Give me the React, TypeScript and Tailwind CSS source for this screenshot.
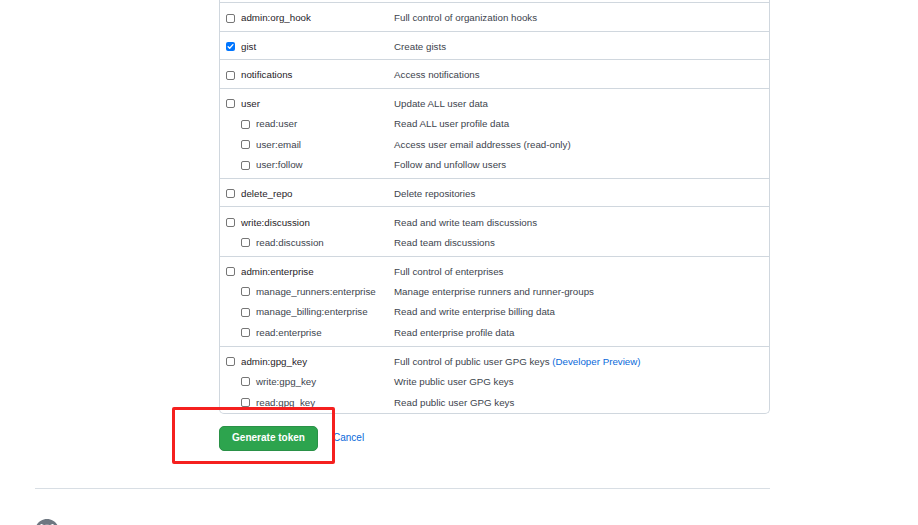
import React from "react";

type Sub = { name: string; desc: string };
type Scope = { name: string; desc: React.ReactNode; checked?: boolean; subs?: Sub[] };

const scopes: Scope[] = [
  { name: "admin:org_hook", desc: "Full control of organization hooks" },
  { name: "gist", desc: "Create gists", checked: true },
  { name: "notifications", desc: "Access notifications" },
  {
    name: "user",
    desc: "Update ALL user data",
    subs: [
      { name: "read:user", desc: "Read ALL user profile data" },
      { name: "user:email", desc: "Access user email addresses (read-only)" },
      { name: "user:follow", desc: "Follow and unfollow users" },
    ],
  },
  { name: "delete_repo", desc: "Delete repositories" },
  {
    name: "write:discussion",
    desc: "Read and write team discussions",
    subs: [{ name: "read:discussion", desc: "Read team discussions" }],
  },
  {
    name: "admin:enterprise",
    desc: "Full control of enterprises",
    subs: [
      { name: "manage_runners:enterprise", desc: "Manage enterprise runners and runner-groups" },
      { name: "manage_billing:enterprise", desc: "Read and write enterprise billing data" },
      { name: "read:enterprise", desc: "Read enterprise profile data" },
    ],
  },
  {
    name: "admin:gpg_key",
    desc: (
      <>
        Full control of public user GPG keys <span className="text-[#0969da]">(Developer Preview)</span>
      </>
    ),
    subs: [
      { name: "write:gpg_key", desc: "Write public user GPG keys" },
      { name: "read:gpg_key", desc: "Read public user GPG keys" },
    ],
  },
];

function Checkbox({ checked }: { checked?: boolean }) {
  if (checked) {
    return (
      <span className="flex h-[9px] w-[9px] shrink-0 items-center justify-center rounded-[2px] bg-[#0075ff]">
        <svg width="7" height="7" viewBox="0 0 8 8" fill="none">
          <path d="M1.3 4.2 L3.1 6 L6.7 1.8" stroke="white" strokeWidth="1.5" strokeLinecap="round" strokeLinejoin="round" />
        </svg>
      </span>
    );
  }
  return <span className="h-[9px] w-[9px] shrink-0 rounded-[2px] border border-[#767676] bg-white" />;
}

function ScopeRow({ scope, last }: { scope: Scope; last: boolean }) {
  return (
    <div className={`border-t border-[#d0d7de] pl-[6px] pt-[5px] ${last ? "pb-0" : "pb-[2.6px]"}`}>
      <div className="flex h-[20px] items-center">
        <div className="flex w-[168px] items-center gap-[6px]">
          <Checkbox checked={scope.checked} />
          <span className="text-[#1f2328]">{scope.name}</span>
        </div>
        <span className="text-[#3d444d]">{scope.desc}</span>
      </div>
      {scope.subs?.map((s) => (
        <div key={s.name} className="flex h-[20.5px] items-center">
          <div className="flex w-[168px] items-center gap-[6px] pl-[15px]">
            <Checkbox />
            <span className="text-[#3d444d]">{s.name}</span>
          </div>
          <span className="text-[#3d444d]">{s.desc}</span>
        </div>
      ))}
    </div>
  );
}

export default function App() {
  return (
    <div className="relative h-[525px] w-[918px] overflow-hidden bg-white font-['Liberation_Sans',Arial,sans-serif] text-[9.75px] leading-none">
      <div className="ml-[35px] w-[735px]">
        <div className="ml-[184px] w-[551px]">
          <div className="rounded-b-[5px] border-x border-b border-[#d0d7de] pt-[2px]">
            {scopes.map((s, i) => (
              <ScopeRow key={s.name} scope={s} last={i === scopes.length - 1} />
            ))}
          </div>
          <div className="mt-[12px] flex items-center gap-[15px]">
            <button className="flex h-[25px] w-[99px] items-center justify-center rounded-[5px] border border-[#2a9147] bg-[#2da44e] text-[10px] font-bold text-white">
              Generate token
            </button>
            <span className="text-[10px] text-[#0969da]">Cancel</span>
          </div>
        </div>
        <div className="mt-[37px] border-t border-[#d8dee4] pt-[30px]">
          <svg width="24" height="24" viewBox="0 0 16 16" fill="#6e7781">
            <path d="M8 0C3.58 0 0 3.58 0 8c0 3.54 2.29 6.53 5.47 7.59.4.07.55-.17.55-.38 0-.19-.01-.82-.01-1.49-2.01.37-2.53-.49-2.69-.94-.09-.23-.48-.94-.82-1.13-.28-.15-.68-.52-.01-.53.63-.01 1.08.58 1.23.82.72 1.21 1.87.87 2.33.66.07-.52.28-.87.51-1.07-1.78-.2-3.64-.89-3.64-3.95 0-.87.31-1.59.82-2.15-.08-.2-.36-1.02.08-2.12 0 0 .67-.21 2.2.82.64-.18 1.32-.27 2-.27.68 0 1.36.09 2 .27 1.53-1.04 2.2-.82 2.2-.82.44 1.1.16 1.92.08 2.12.51.56.82 1.27.82 2.15 0 3.07-1.87 3.75-3.65 3.95.29.25.54.73.54 1.48 0 1.07-.01 1.93-.01 2.2 0 .21.15.46.55.38A8.013 8.013 0 0016 8c0-4.42-3.58-8-8-8z" />
          </svg>
        </div>
      </div>
      <div className="pointer-events-none absolute left-[172px] top-[407px] h-[57px] w-[163px] rounded-[2px] border-[3px] border-[#f5201f]" />
    </div>
  );
}
